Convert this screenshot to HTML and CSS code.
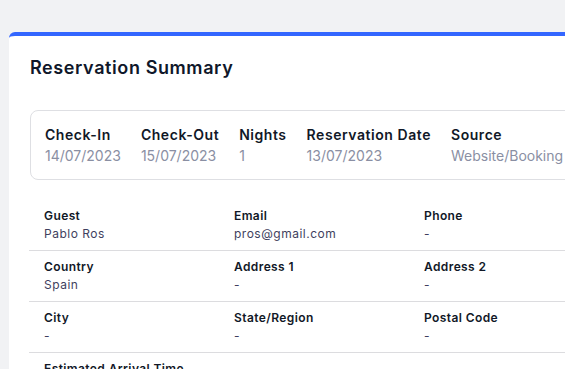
FILE: index.html
```html
<!DOCTYPE html>
<html lang="en">
<head>
    <meta charset="UTF-8">
    <meta name="viewport" content="width=device-width, initial-scale=1.0">
    <title>Reservation Summary</title>
    <link rel="stylesheet" href="styles.css">
</head>
<body>

    <div class="card">
        <h1>Reservation Summary</h1>

        <div class="summary">
            <div class="summary-item">
                <div class="summary-label">Check-In</div>
                <div class="summary-value">14/07/2023</div>
            </div>
            <div class="summary-item">
                <div class="summary-label">Check-Out</div>
                <div class="summary-value">15/07/2023</div>
            </div>
            <div class="summary-item">
                <div class="summary-label">Nights</div>
                <div class="summary-value">1</div>
            </div>
            <div class="summary-item">
                <div class="summary-label">Reservation Date</div>
                <div class="summary-value">13/07/2023</div>
            </div>
            <div class="summary-item">
                <div class="summary-label">Source</div>
                <div class="summary-value">Website/Booking Engine</div>
            </div>
        </div>

        <div class="details">
            <div class="detail-row">
                <div class="detail"><div class="detail-label">Guest</div><div class="detail-value">Pablo Ros</div></div>
                <div class="detail"><div class="detail-label">Email</div><div class="detail-value">pros@gmail.com</div></div>
                <div class="detail"><div class="detail-label">Phone</div><div class="detail-value">-</div></div>
            </div>
            <div class="detail-row">
                <div class="detail"><div class="detail-label">Country</div><div class="detail-value">Spain</div></div>
                <div class="detail"><div class="detail-label">Address 1</div><div class="detail-value">-</div></div>
                <div class="detail"><div class="detail-label">Address 2</div><div class="detail-value">-</div></div>
            </div>
            <div class="detail-row">
                <div class="detail"><div class="detail-label">City</div><div class="detail-value">-</div></div>
                <div class="detail"><div class="detail-label">State/Region</div><div class="detail-value">-</div></div>
                <div class="detail"><div class="detail-label">Postal Code</div><div class="detail-value">-</div></div>
            </div>
            <div class="detail-row">
                <div class="detail"><div class="detail-label">Estimated Arrival Time</div><div class="detail-value">-</div></div>
            </div>
        </div>
    </div>

</body>
</html>
```

FILE: styles.css
```css
body {
    margin: 0;
    padding: 32px 0 0 9px;
    background-color: #f1f2f4;
    font-family: Inter, "Noto Sans", sans-serif;
    overflow: hidden;
}
.card {
    width: 720px;
    min-height: 400px;
    background-color: #fff;
    border-top: 4px solid #3366ff;
    border-top-left-radius: 6px;
    padding: 18px 0 0 21px;
}
h1 {
    margin: 0 0 29px;
    font-size: 18px;
    line-height: 27px;
    font-weight: 600;
    letter-spacing: 0.6px;
    color: #0f172a;
}
.summary {
    display: flex;
    gap: 20px;
    border: 1px solid #dedfe3;
    border-radius: 8px;
    padding: 13px 14px;
    white-space: nowrap;
}
.summary-label {
    font-size: 14px;
    line-height: 21px;
    font-weight: 600;
    letter-spacing: 0.55px;
    color: #111827;
}
.summary-value {
    font-size: 14px;
    line-height: 21px;
    color: #8a8fa3;
}
.details {
    margin: 20px 0 0 -1px;
}
.detail-row {
    display: grid;
    grid-template-columns: repeat(3, 190px);
    border-bottom: 1px solid #dcdcdf;
    padding: 7px 0;
}
.detail {
    padding-left: 15px;
    white-space: nowrap;
}
.detail-label {
    font-size: 12px;
    line-height: 18px;
    font-weight: 600;
    letter-spacing: 0.4px;
    color: #111827;
}
.detail-value {
    font-size: 12px;
    line-height: 18px;
    letter-spacing: 0.5px;
    color: #3f3f5e;
}
```
